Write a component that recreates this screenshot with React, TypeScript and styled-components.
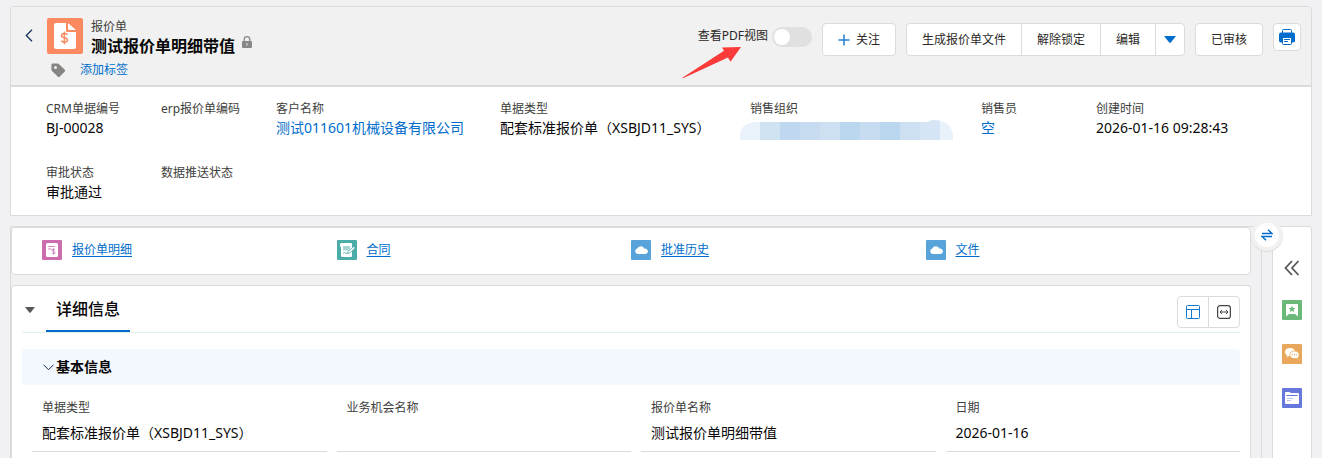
import React from "react";
import styled, { createGlobalStyle } from "styled-components";

const line = "#dddbda";
const blue = "#006dcc";

const GlobalStyle = createGlobalStyle`
  *, *::before, *::after { box-sizing: border-box; }
  body {
    margin: 0;
    background: #f1f1f3;
    color: #080707;
    font-family: "Noto Sans", "Noto Sans CJK SC", sans-serif;
    font-size: 12px;
    line-height: 18px;
  }
  button { font: inherit; color: inherit; cursor: pointer; }
  h1, h2, h3, p, dl, dd { margin: 0; }
  svg { display: block; flex: none; }
`;

const Page = styled.div`
  display: flex;
  flex-direction: column;
  gap: 10px;
  min-height: 100vh;
  padding: 6px 10px 0;
`;

const RecordCard = styled.section`
  border: 1px solid ${line};
  border-radius: 4px 4px 0 0;
  background: #fff;
`;

const RecordHeader = styled.header`
  position: relative;
  display: flex;
  align-items: flex-start;
  justify-content: space-between;
  padding: 11px 10px 6px 12px;
  border-bottom: 2px solid ${line};
  border-radius: 4px 4px 0 0;
  background: #f1f1f1;
`;

const Identity = styled.div`
  display: flex;
  align-items: flex-start;
`;

const IconButton = styled.button`
  display: flex;
  align-items: center;
  justify-content: center;
  padding: 0;
  border: 0;
  background: none;
`;

const BackButton = styled(IconButton)`
  width: 12px;
  height: 34px;
  margin-right: 12px;
`;

const IdentityBody = styled.div`
  display: flex;
  flex-direction: column;
  gap: 5px;
`;

const TitleRow = styled.div`
  display: flex;
  gap: 8px;
`;

const Title = styled.h1`
  display: flex;
  align-items: flex-start;
  gap: 7px;
  font-size: 16px;
  line-height: 20px;
  font-weight: 700;
  white-space: nowrap;
`;

const Kind = styled.p`
  color: #3e3e3c;
`;

const TagRow = styled.div`
  display: flex;
  align-items: center;
  gap: 14px;
  padding-left: 4px;
`;

const TextLink = styled.a`
  color: ${blue};
  text-decoration: none;
`;

const Actions = styled.div`
  display: flex;
  align-items: flex-start;
  gap: 10px;
  padding-top: 5px;
`;

const PdfToggle = styled.label`
  display: flex;
  align-items: flex-start;
  gap: 4px;
  padding-top: 4px;
  color: #2b2826;
  white-space: nowrap;
`;

const Switch = styled.input`
  appearance: none;
  width: 40px;
  height: 20px;
  margin: 0;
  padding: 2px;
  border-radius: 10px;
  background: #e0e0e0;
  cursor: pointer;
  &::before {
    content: "";
    display: block;
    width: 16px;
    height: 16px;
    border-radius: 8px;
    background: #fff;
  }
  &:checked { background: ${blue}; }
  &:checked::before { margin-left: 20px; }
`;

const ActionButton = styled.button`
  display: flex;
  align-items: center;
  justify-content: center;
  gap: 6px;
  height: 33px;
  padding: 0 15px;
  border: 1px solid ${line};
  border-radius: 4px;
  background: #fff;
  color: #2b2826;
  white-space: nowrap;
`;

const ButtonGroup = styled.div`
  display: flex;
  & > button { border-radius: 0; }
  & > button + button { margin-left: -1px; }
  & > button:first-child { border-radius: 4px 0 0 4px; }
  & > button:last-child { border-radius: 0 4px 4px 0; }
`;

const SquareButton = styled(ActionButton)<{ $width: number; $height: number }>`
  width: ${(p) => p.$width}px;
  height: ${(p) => p.$height}px;
  padding: 0;
`;

const Pointer = styled.svg`
  position: absolute;
  top: 40px;
  right: 569px;
`;

const Highlights = styled.dl`
  display: grid;
  grid-template-columns: 115fr 115fr 224fr 250fr 231fr 115fr 205fr;
  row-gap: 26px;
  padding: 13px 10px 13px 35px;
`;

const Highlight = styled.div`
  min-width: 0;
  white-space: nowrap;
`;

const FieldLabel = styled.dt`
  color: #3e3e3c;
  line-height: 18px;
`;

const FieldValue = styled.dd`
  height: 20px;
  font-size: 14px;
  line-height: 20px;
`;

const Redacted = styled.svg`
  margin-left: -10px;
`;

const Workspace = styled.div`
  display: flex;
  flex: 1;
  gap: 10px;
`;

const MainColumn = styled.main`
  position: relative;
  display: flex;
  flex: 1;
  flex-direction: column;
  gap: 10px;
  min-width: 0;
  padding-right: 10px;
  border: 1px solid ${line};
  border-bottom: 0;
`;

const Panel = styled.section`
  border: 1px solid ${line};
  border-radius: 4px;
  background: #fff;
`;

const RelatedLinks = styled(Panel)`
  display: grid;
  grid-template-columns: repeat(4, 1fr);
  padding: 12px 30px 14px;
`;

const RelatedLink = styled.a`
  display: flex;
  align-items: center;
  gap: 10px;
  color: ${blue};
  text-underline-offset: 2px;
`;

const Details = styled(Panel)`
  flex: 1;
  padding: 10px 10px 0;
  border-bottom: 0;
  border-radius: 4px 4px 0 0;
`;

const DetailsHeader = styled.div`
  display: flex;
  align-items: flex-start;
  height: 37px;
  border-bottom: 1px solid #e2f2e6;
`;

const CollapseButton = styled(IconButton)`
  width: 16px;
  height: 27px;
  margin-right: 8px;
`;

const TabTitle = styled.h2`
  height: 36px;
  padding: 0 10px;
  border-bottom: 2px solid ${blue};
  font-size: 16px;
  line-height: 26px;
  font-weight: 500;
`;

const ViewButtons = styled(ButtonGroup)`
  margin-left: auto;
`;

const SectionBar = styled.h3`
  margin-top: 16px;
  border-radius: 4px;
  background: #f3f7fe;
  font-size: 14px;
  line-height: 20px;
`;

const SectionToggle = styled.button`
  display: flex;
  align-items: center;
  gap: 2px;
  width: 100%;
  height: 36px;
  padding: 0 21px;
  border: 0;
  background: none;
  font-weight: 700;
`;

const FieldGrid = styled.dl`
  display: grid;
  grid-template-columns: repeat(4, 1fr);
  column-gap: 10px;
  padding: 14px 0 10px 10px;
`;

const Field = styled.div`
  display: flex;
  flex-direction: column;
  gap: 6px;
  min-width: 0;
  padding: 0 10px 8px;
  border-bottom: 1px solid ${line};
`;

const SidePanel = styled.aside`
  display: flex;
  flex-direction: column;
  align-items: center;
  gap: 22px;
  width: 40px;
  padding-top: 31px;
  border: 1px solid ${line};
  border-bottom: 0;
  border-radius: 4px 4px 0 0;
  background: #fff;
`;

const SideTools = styled.nav`
  display: flex;
  flex-direction: column;
  gap: 24px;
`;

const SideButton = styled(IconButton)`
  width: 20px;
  height: 20px;
`;

const SwapButton = styled(IconButton)`
  position: absolute;
  z-index: 1;
  top: -8px;
  right: -22px;
  width: 32px;
  height: 32px;
  border: 4px solid #f1f1f1;
  border-radius: 16px;
  background: #fff;
  box-shadow: 0 1px 0 ${line};
`;

const CloudIcon = () => (
  <svg width="20" height="20" viewBox="0 0 20 20">
    <rect width="20" height="20" rx="1" fill="#58a3da" />
    <path d="M6.800 14a2.800 2.800 0 0 1-.5-5.500A4 4 0 0 1 13.600 8.700 2.700 2.700 0 1 1 13.800 14z" fill="#fff" />
  </svg>
);

const QuoteLinesIcon = () => (
  <svg width="20" height="20" viewBox="0 0 20 20">
    <rect width="20" height="20" rx="1" fill="#cb6dae" />
    <rect x="4" y="3" width="12" height="14" rx="1.500" fill="#fff" />
    <path d="M6 6.500h7M6 9h3.500" stroke="#cb6dae" strokeWidth=".8" />
    <path d="M13 9.700c-.6-.8-3-.8-3 .6 0 1.500 3 .9 3 2.500 0 1.300-2.500 1.300-3.200.3M11.500 8.300v6" stroke="#cb6dae" strokeWidth=".8" fill="none" />
  </svg>
);

const ContractIcon = () => (
  <svg width="20" height="20" viewBox="0 0 20 20">
    <rect width="20" height="20" rx="1" fill="#4bada7" />
    <path d="M4.500 3h9.500a1 1 0 0 1 1 1v12a1 1 0 0 1-1 1H5.500a1.500 1.500 0 0 1-1.500-1.500V7.500L3 6V4.500A1.500 1.500 0 0 1 4.500 3z" fill="#fff" />
    <path d="M6 6h7v4.500H6z" fill="#a5d6d3" />
    <path d="M6 13.500l1.500-1 1.500 1 1.500-.5" fill="none" stroke="#4bada7" strokeWidth=".8" />
    <path d="M10.500 13.500l.6-2.200 5.600-4.800 1.500 1.600-5.500 4.900z" fill="#fff" stroke="#4bada7" strokeWidth=".8" />
  </svg>
);

const mosaic = ["#e9f1fa", "#cfe3f3", "#bfd7ef", "#c7dcf1", "#cde0f1", "#bbd7ef", "#c7dcf1", "#bbd7ef", "#cde0f2", "#d5e5f5", "#e9f2fb"];

const RedactedValue = () => (
  <Redacted width="213" height="22" viewBox="0 0 213 22" aria-hidden="true">
    <clipPath id="smudge">
      <path d="M0 22v-6Q2 4 18 4H188q2-2 6-2 5 0 7 1 10 2 12 14v5z" />
    </clipPath>
    <g clipPath="url(#smudge)">
      {mosaic.map((fill, i) => (
        <rect key={i} x={i * 20} width="20" height="22" fill={fill} />
      ))}
    </g>
  </Redacted>
);

const related = [
  { name: "报价单明细", icon: <QuoteLinesIcon /> },
  { name: "合同", icon: <ContractIcon /> },
  { name: "批准历史", icon: <CloudIcon /> },
  { name: "文件", icon: <CloudIcon /> },
];

const highlights: { label: string; value?: React.ReactNode }[] = [
  { label: "CRM单据编号", value: "BJ-00028" },
  { label: "erp报价单编码" },
  { label: "客户名称", value: <TextLink href="#customer">测试011601机械设备有限公司</TextLink> },
  { label: "单据类型", value: "配套标准报价单（XSBJD11_SYS）" },
  { label: "销售组织", value: <RedactedValue /> },
  { label: "销售员", value: <TextLink href="#seller">空</TextLink> },
  { label: "创建时间", value: "2026-01-16 09:28:43" },
  { label: "审批状态", value: "审批通过" },
  { label: "数据推送状态" },
];

const fields = [
  { label: "单据类型", value: "配套标准报价单（XSBJD11_SYS）" },
  { label: "业务机会名称", value: "" },
  { label: "报价单名称", value: "测试报价单明细带值" },
  { label: "日期", value: "2026-01-16" },
];

export default function App() {
  return (
    <Page>
      <GlobalStyle />
      <RecordCard>
        <RecordHeader>
          <Identity>
            <BackButton aria-label="返回">
              <svg width="8" height="13" viewBox="0 0 8 13">
                <path d="M7 .7L1.300 6.500 7 12.300" fill="none" stroke="#16325c" strokeWidth="1.300" />
              </svg>
            </BackButton>
            <IdentityBody>
              <TitleRow>
                <svg width="36" height="36" viewBox="0 0 36 36">
                  <rect width="36" height="36" rx="2" fill="#fb8a61" />
                  <path d="M9 5h10v7.500a1.500 1.500 0 0 0 1.500 1.500H29v15a2 2 0 0 1-2 2H9a2 2 0 0 1-2-2V7a2 2 0 0 1 2-2z" fill="#fff" />
                  <path d="M21 5l8 7h-7a1 1 0 0 1-1-1z" fill="#fff" />
                  <path d="M20.500 16.500c-1.400-1.500-6-1.400-6 1.200 0 2.800 6 1.500 6 4.300 0 2.600-4.800 2.600-6.300.7M17.400 13.600v12.600" fill="none" stroke="#fb8a61" strokeWidth="1.500" />
                </svg>
                <div>
                  <Kind>报价单</Kind>
                  <Title>
                    测试报价单明细带值
                    <svg width="10" height="12" viewBox="0 0 10 12">
                      <path d="M2.200 5.500V3.500a2.800 2.800 0 0 1 5.600 0v2" fill="none" stroke="#8a8887" strokeWidth="1.300" />
                      <rect y="5" width="10" height="7" rx="1" fill="#8a8887" />
                      <path d="M5 7v2.800" stroke="#d5d5d5" strokeWidth="1.200" />
                    </svg>
                  </Title>
                </div>
              </TitleRow>
              <TagRow>
                <svg width="15" height="15" viewBox="0 0 15 15">
                  <path d="M1.500.5h5a2 2 0 0 1 1.300.5l6 5.800a1.200 1.200 0 0 1 0 1.700l-5.200 5.200a1.200 1.200 0 0 1-1.700 0L1 8a2 2 0 0 1-.6-1.400V1.700A1.200 1.200 0 0 1 1.500.5z" fill="#878583" />
                  <circle cx="4.500" cy="4.500" r="1.500" fill="#f1f1f1" />
                </svg>
                <TextLink href="#tags">添加标签</TextLink>
              </TagRow>
            </IdentityBody>
          </Identity>
          <Actions>
            <PdfToggle>
              查看PDF视图
              <Switch type="checkbox" role="switch" />
            </PdfToggle>
            <ActionButton>
              <svg width="12" height="12" viewBox="0 0 12 12">
                <path d="M6 .5v11M.5 6h11" stroke="#2381d3" strokeWidth="1.500" />
              </svg>
              关注
            </ActionButton>
            <ButtonGroup>
              <ActionButton>生成报价单文件</ActionButton>
              <ActionButton>解除锁定</ActionButton>
              <ActionButton>编辑</ActionButton>
              <SquareButton $width={30} $height={33} aria-label="更多操作">
                <svg width="12" height="7" viewBox="0 0 12 7">
                  <path d="M0 0h12L7 6.300a1.400 1.400 0 0 1-2 0z" fill={blue} />
                </svg>
              </SquareButton>
            </ButtonGroup>
            <ActionButton>已审核</ActionButton>
            <SquareButton $width={28} $height={28} aria-label="打印">
              <svg width="16" height="16" viewBox="0 0 16 16">
                <path d="M3.500 4V1.500a1 1 0 0 1 1-1h7a1 1 0 0 1 1 1V4" fill="#fff" stroke={blue} />
                <rect y="3.500" width="16" height="10" rx="2" fill={blue} />
                <path d="M3.500 8.500h9v6a1 1 0 0 1-1 1h-7a1 1 0 0 1-1-1z" fill="#fff" stroke={blue} />
                <path d="M5 10.500h6M5 12.500h4" stroke={blue} />
              </svg>
            </SquareButton>
          </Actions>
          <Pointer width="60" height="32" viewBox="0 0 60 32" aria-hidden="true">
            <path d="M0 31L42 3.700 40 .5 59 0 48.500 14.700 46 10.500 1 31.200z" fill="#fb3a3a" />
          </Pointer>
        </RecordHeader>
        <Highlights>
          {highlights.map((h) => (
            <Highlight key={h.label}>
              <FieldLabel>{h.label}</FieldLabel>
              <FieldValue>{h.value}</FieldValue>
            </Highlight>
          ))}
        </Highlights>
      </RecordCard>

      <Workspace>
        <MainColumn>
          <SwapButton aria-label="切换布局">
            <svg width="12" height="12" viewBox="0 0 12 12">
              <path d="M1 4.500h10L7 .8M11 7.500H1l4 3.700" fill="none" stroke={blue} strokeWidth="1.500" />
            </svg>
          </SwapButton>
          <RelatedLinks>
            {related.map((r) => (
              <RelatedLink key={r.name} href="#related">
                {r.icon}
                {r.name}
              </RelatedLink>
            ))}
          </RelatedLinks>
          <Details>
            <DetailsHeader>
              <CollapseButton aria-label="折叠">
                <svg width="10" height="6" viewBox="0 0 10 6">
                  <path d="M0 0h10L5.700 5.500a1 1 0 0 1-1.400 0z" fill="#5b5957" />
                </svg>
              </CollapseButton>
              <TabTitle>详细信息</TabTitle>
              <ViewButtons>
                <SquareButton $width={32} $height={32} aria-label="布局视图">
                  <svg width="14" height="14" viewBox="0 0 14 14">
                    <path d="M1.500.5h11a1 1 0 0 1 1 1v11a1 1 0 0 1-1 1h-11a1 1 0 0 1-1-1v-11a1 1 0 0 1 1-1zM.5 4.500h13M5.500 4.500v9" fill="none" stroke="#1478d1" />
                  </svg>
                </SquareButton>
                <SquareButton $width={32} $height={32} aria-label="宽度">
                  <svg width="14" height="14" viewBox="0 0 14 14">
                    <rect x=".6" y=".6" width="12.800" height="12.800" rx="2.500" fill="none" stroke="#444" strokeWidth="1.200" />
                    <path d="M3.500 7h7M5 5L3 7l2 2M9 5l2 2-2 2" fill="none" stroke="#444" />
                  </svg>
                </SquareButton>
              </ViewButtons>
            </DetailsHeader>
            <SectionBar>
              <SectionToggle aria-expanded="true">
                <svg width="11" height="7" viewBox="0 0 11 7">
                  <path d="M.5.7l5 5 5-5" fill="none" stroke="#16325c" />
                </svg>
                基本信息
              </SectionToggle>
            </SectionBar>
            <FieldGrid>
              {fields.map((f) => (
                <Field key={f.label}>
                  <FieldLabel>{f.label}</FieldLabel>
                  <FieldValue>{f.value}</FieldValue>
                </Field>
              ))}
            </FieldGrid>
          </Details>
        </MainColumn>
        <SidePanel>
          <SideButton aria-label="展开侧栏">
            <svg width="16" height="16" viewBox="0 0 16 16">
              <path d="M8 1L1.500 8 8 15M14.500 1L8 8l6.500 7" fill="none" stroke="#5b5957" strokeWidth="1.800" />
            </svg>
          </SideButton>
          <SideTools>
            <SideButton aria-label="收藏">
              <svg width="20" height="20" viewBox="0 0 20 20">
                <rect width="20" height="20" rx="1" fill="#6bb978" />
                <path d="M5 4h10a1 1 0 0 1 1 1v11.500l-3-2.500H7l-3 2.500V5a1 1 0 0 1 1-1z" fill="#fff" />
                <path d="M10 5.500l1 2.500h2.500l-2 1.700.8 2.600-2.300-1.500-2.300 1.500.8-2.600-2-1.700H9z" fill="#6bb978" />
              </svg>
            </SideButton>
            <SideButton aria-label="讨论">
              <svg width="20" height="20" viewBox="0 0 20 20">
                <rect width="20" height="20" rx="1" fill="#e9a75b" />
                <path d="M8 4c3 0 5 1.500 5 3.800S11 12 8 12l-3.500 1 .6-1.700C3.700 10.500 3 9.300 3 8c0-2.500 2-4 5-4z" fill="#fff" />
                <path d="M12.500 7c2.800 0 4.700 1.500 4.700 3.700 0 1.200-.5 2-1.300 2.700l.6 1.800-2.500-.8c-3.600.5-6.200-1.200-6.200-3.700C7.800 8.500 9.700 7 12.500 7z" fill="#fff" stroke="#e9a75b" strokeWidth=".8" />
                <path d="M9.800 10.600h1M12 10.600h1M14.200 10.600h1" stroke="#e9a75b" strokeWidth="1.200" />
              </svg>
            </SideButton>
            <SideButton aria-label="文件夹">
              <svg width="20" height="20" viewBox="0 0 20 20">
                <rect width="20" height="20" rx="1" fill="#6777dc" />
                <path d="M3 5a1 1 0 0 1 1-1h3.500L9 5h7a1 1 0 0 1 1 1v9a1 1 0 0 1-1 1H4a1 1 0 0 1-1-1z" fill="#fff" />
                <path d="M4.500 7.500h11" stroke="#6777dc" />
                <path d="M5 10.500h6M5 12.500h4" stroke="#a9b2ea" strokeWidth=".8" />
              </svg>
            </SideButton>
          </SideTools>
        </SidePanel>
      </Workspace>
    </Page>
  );
}
